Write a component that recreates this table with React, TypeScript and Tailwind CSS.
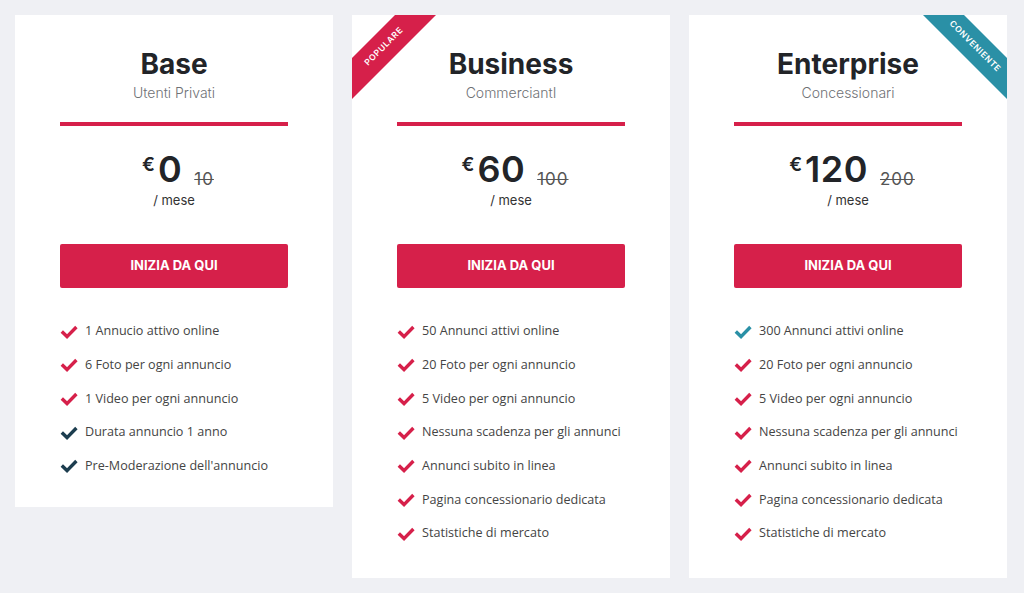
import React from "react";

type Feature = { text: string; color: string };
type Plan = {
  name: string;
  sub: string;
  price: string;
  old: string;
  features: Feature[];
  ribbon?: "left" | "right";
  pb: string;
};

const RED = "#d6204a";
const NAVY = "#1c3d4f";
const TEAL = "#2a90a6";

const plans: Plan[] = [
  {
    name: "Base",
    sub: "Utenti Privati",
    price: "0",
    old: "10",
    pb: "pb-[24px]",
    features: [
      { text: "1 Annucio attivo online", color: RED },
      { text: "6 Foto per ogni annuncio", color: RED },
      { text: "1 Video per ogni annuncio", color: RED },
      { text: "Durata annuncio 1 anno", color: NAVY },
      { text: "Pre-Moderazione dell'annuncio", color: NAVY },
    ],
  },
  {
    name: "Business",
    sub: "CommerciantI",
    price: "60",
    old: "100",
    ribbon: "left",
    pb: "pb-[27px]",
    features: [
      { text: "50 Annunci attivi online", color: RED },
      { text: "20 Foto per ogni annuncio", color: RED },
      { text: "5 Video per ogni annuncio", color: RED },
      { text: "Nessuna scadenza per gli annunci", color: RED },
      { text: "Annunci subito in linea", color: RED },
      { text: "Pagina concessionario dedicata", color: RED },
      { text: "Statistiche di mercato", color: RED },
    ],
  },
  {
    name: "Enterprise",
    sub: "Concessionari",
    price: "120",
    old: "200",
    ribbon: "right",
    pb: "pb-[27px]",
    features: [
      { text: "300 Annunci attivi online", color: TEAL },
      { text: "20 Foto per ogni annuncio", color: RED },
      { text: "5 Video per ogni annuncio", color: RED },
      { text: "Nessuna scadenza per gli annunci", color: RED },
      { text: "Annunci subito in linea", color: RED },
      { text: "Pagina concessionario dedicata", color: RED },
      { text: "Statistiche di mercato", color: RED },
    ],
  },
];

const head = { fontFamily: "Inter, 'Noto Sans', sans-serif" };
const body = { fontFamily: "'Open Sans', 'Noto Sans', sans-serif" };

function Check({ color }: { color: string }) {
  return (
    <svg width="18" height="14" viewBox="0 0 18 14" className="mr-[7px] shrink-0">
      <path d="M1.8 6.6 L7 11.6 L16.4 2" fill="none" stroke={color} strokeWidth="3.4" strokeLinejoin="miter" />
    </svg>
  );
}

function Card({ plan }: { plan: Plan }) {
  return (
    <div className={`relative w-[318px] shrink-0 overflow-hidden bg-white px-[45px] pt-[33px] ${plan.pb}`}>
      {plan.ribbon === "left" && (
        <div
          className="absolute left-[-38px] top-[17px] flex h-[29px] w-[140px] -rotate-45 items-center justify-center bg-[#d6204a] text-[8.5px] font-semibold uppercase tracking-[0.6px] text-white"
          style={head}
        >
          Populare
        </div>
      )}
      {plan.ribbon === "right" && (
        <div
          className="absolute right-[-38px] top-[17px] flex h-[29px] w-[140px] rotate-45 items-center justify-center bg-[#2a90a6] text-[8.5px] font-semibold uppercase tracking-[0.6px] text-white"
          style={head}
        >
          Conveniente
        </div>
      )}
      <div className="flex flex-col items-center" style={head}>
        <div className="text-[28px] font-bold leading-[32px] text-[#222428]">{plan.name}</div>
        <div className="mt-[3px] text-[14px] font-light leading-[20px] text-[#6f7175]">{plan.sub}</div>
      </div>
      <div className="mt-[19px] h-[4px] w-full bg-[#d6204a]" />
      <div className="mt-[23px] flex flex-col items-center" style={head}>
        <div className="flex items-start pl-[8px] text-[#222428]">
          <span className="mt-[7px] text-[19px] font-semibold leading-[17px]">€</span>
          <span className="ml-[3px] text-[36px] font-semibold leading-[40px] tracking-[0.5px]">{plan.price}</span>
          <span className="ml-[12px] mt-[22px] text-[17px] font-normal leading-[16px] tracking-[1px] text-[#555] line-through">
            {plan.old}
          </span>
        </div>
        <div className="mt-[3px] text-[13px] leading-[16px] text-[#333]">/ mese</div>
      </div>
      <button
        className="mt-[36px] flex h-[44px] w-full items-center justify-center rounded-[2px] bg-[#d6204a] text-[13px] font-bold text-white"
        style={head}
      >
        INIZIA DA QUI
      </button>
      <ul className="mt-[27px]" style={body}>
        {plan.features.map((f, i) => (
          <li key={i} className="flex h-[33.67px] items-center whitespace-nowrap text-[12.6px] text-[#444]">
            <Check color={f.color} />
            <span>{f.text}</span>
          </li>
        ))}
      </ul>
    </div>
  );
}

export default function App() {
  return (
    <div className="flex min-h-[593px] items-start gap-[19px] bg-[#eff0f4] pl-[15px] pt-[15px]">
      {plans.map((p) => (
        <Card key={p.name} plan={p} />
      ))}
    </div>
  );
}
